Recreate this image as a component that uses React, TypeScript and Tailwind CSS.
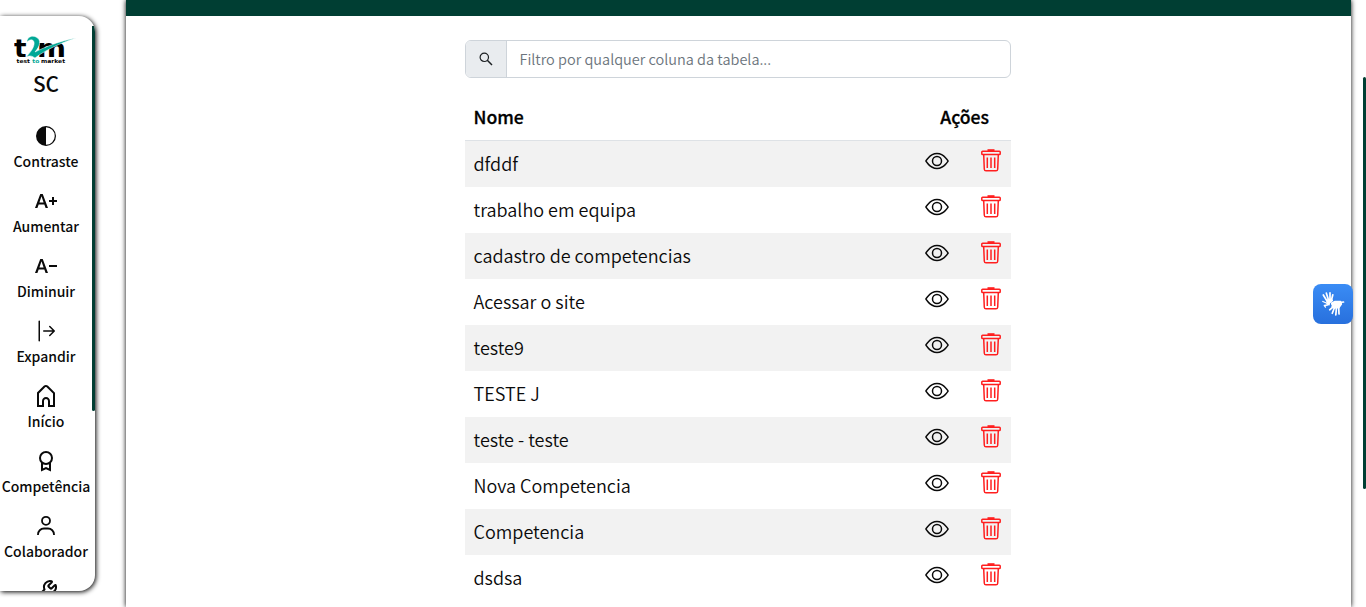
import type { ReactNode } from "react";
import { BsArrowBarRight, BsCircleHalf, BsEye } from "react-icons/bs";
import { CgHome } from "react-icons/cg";
import { MdTextDecrease, MdTextIncrease } from "react-icons/md";
import { Wrench } from "lucide-react";

const rows = [
  "dfddf",
  "trabalho em equipa",
  "cadastro de competencias",
  "Acessar o site",
  "teste9",
  "TESTE J",
  "teste - teste",
  "Nova Competencia",
  "Competencia",
  "dsdsa",
];

function Logo() {
  return (
    <svg width="62" height="30" viewBox="0 0 62 30" aria-label="t2m test to market">
      <g fontFamily="'DejaVu Sans'" fontWeight="700">
        <text x="0" y="21.500" fontSize="25" textLength="12.500" lengthAdjust="spacingAndGlyphs">t</text>
        <text x="23" y="21.500" fontSize="25" textLength="29" lengthAdjust="spacingAndGlyphs">m</text>
        <text x="2.500" y="28" fontSize="5.400" textLength="13.500" lengthAdjust="spacingAndGlyphs">test</text>
        <text x="18.300" y="28" fontSize="5.400" fill="#00a896" textLength="7" lengthAdjust="spacingAndGlyphs">to</text>
        <text x="27" y="28" fontSize="5.400" textLength="24" lengthAdjust="spacingAndGlyphs">market</text>
      </g>
      <path d="M13 7C13 2 18 0 22 2C28 5 26 11 21 17C31 12 46 6 62 3C46 8 30 16 21 23C18 21 16 20 12 22C17 17 21 11 20 7C19 4 16 4 13 7Z" fill="#00a896" stroke="#fff" strokeWidth=".5" />
    </svg>
  );
}

function SearchIcon() {
  return (
    <svg width="14" height="14" viewBox="0 0 14 14" fill="none" stroke="#1b1f22">
      <circle cx="5.300" cy="5.300" r="4.200" strokeWidth="1.200" />
      <path d="M8.300 8.300L13 13" strokeWidth="1.500" />
    </svg>
  );
}

function AwardIcon() {
  return (
    <svg width="24" height="24" viewBox="0 0 24 24" fill="none" stroke="currentColor" strokeWidth="2">
      <circle cx="12" cy="9" r="6" />
      <path d="M8 14v7l4-2 4 2v-7" />
    </svg>
  );
}

function UserIcon() {
  return (
    <svg width="24" height="24" viewBox="0 0 24 24" fill="none" stroke="currentColor" strokeWidth="1.800">
      <circle cx="12" cy="6.800" r="4" />
      <path d="M4 21v-.5a6 6 0 0 1 6-6h4a6 6 0 0 1 6 6v.5" />
    </svg>
  );
}

function TrashIcon() {
  return (
    <svg width="20" height="24" viewBox="0 0 20 24" fill="none" stroke="#ff1f1f" strokeWidth="1.5">
      <rect x=".8" y="2.200" width="18.400" height="3.400" rx=".8" />
      <path d="M6.500 1.200h7" strokeWidth="2" />
      <path d="M2.700 5.700l.6 14.500c.1 1 .7 1.600 1.700 1.600h10c1 0 1.600-.6 1.700-1.600l.6-14.500M6.300 8.500v10.500M10 8.500v10.500M13.700 8.500v10.500" />
    </svg>
  );
}

function HandsIcon() {
  return (
    <svg width="24" height="26" viewBox="0 0 24 26" fill="none" stroke="#fff" strokeLinecap="round" strokeLinejoin="round">
      <path d="M6 9L10.500 8L11.500 9.500L8.500 12L8 14L6 13Z" fill="#fff" strokeWidth="1.200" />
      <path d="M6 10L2.300 4M7.500 9L5.300 2M9 9V1.800M10.500 9L11.800 3.800" strokeWidth="1.700" />
      <path d="M6.500 12.500L1.800 10.500M6.500 14L3.300 14.500L4.500 16" strokeWidth="1.300" />
      <path d="M10.500 12L14 10.300L19.500 10.300L20.500 13L18 16.500L13 17L11 15.500L14 13.500L11 14Z" fill="#fff" strokeWidth="1.300" />
      <path d="M19 11.500L22.500 11M12.500 15.500L8.700 18.800M13.500 16.500L11.300 22.300M15.500 16.500L14.800 23.800M17.700 16L18 23" strokeWidth="1.700" />
    </svg>
  );
}

function MenuItem({ icon, label }: { icon: ReactNode; label?: string }) {
  return (
    <div className="flex h-[65px] shrink-0 flex-col items-center">
      <div className="flex h-6 items-center">{icon}</div>
      {label && (
        <span className="mt-[2px] text-[14px] leading-[22px] font-medium whitespace-nowrap">{label}</span>
      )}
    </div>
  );
}

export default function App() {
  return (
    <div className="relative flex h-[607px] w-[1366px] overflow-hidden bg-white font-['Noto_Sans_CJK_JP',sans-serif] text-[#0a0a0a]">
      <aside className="relative mt-4 flex h-[575px] w-[95px] shrink-0 flex-col overflow-hidden rounded-r-[16px] shadow-[1px_1px_5px_#000]">
        <div className="flex h-[108px] w-[92px] shrink-0 flex-col items-center">
          <div className="mt-[19px] mr-[2px] h-[30px]">
            <Logo />
          </div>
          <span className="mt-[2px] text-[20.8px] leading-[32px] font-medium">SC</span>
        </div>
        <nav className="flex w-[92px] flex-col">
          <MenuItem icon={<BsCircleHalf size={20} />} label="Contraste" />
          <MenuItem icon={<MdTextIncrease size={24} />} label="Aumentar" />
          <MenuItem icon={<MdTextDecrease size={24} />} label="Diminuir" />
          <MenuItem icon={<BsArrowBarRight size={24} />} label="Expandir" />
          <MenuItem icon={<CgHome size={24} />} label="Início" />
          <MenuItem icon={<AwardIcon />} label="Competência" />
          <MenuItem icon={<UserIcon />} label="Colaborador" />
          <MenuItem icon={<Wrench size={24} strokeWidth={2} />} />
        </nav>
        <div className="absolute top-[10px] right-0 h-[385px] w-[3px] rounded-b-sm bg-[#003e33]" />
      </aside>

      <main className="ml-[31px] flex w-[1225px] shrink-0 flex-col items-center shadow-[0_0_5px_#000]">
        <div className="h-4 w-full shrink-0 bg-[#003e33]" />
        <div className="mt-6 ml-[-1px] flex h-[38px] w-[546px] shrink-0 overflow-hidden rounded-md border border-[#ced4da]">
          <div className="flex w-[41px] items-center justify-center border-r border-[#ced4da] bg-[#e9ecef]">
            <SearchIcon />
          </div>
          <input
            className="min-w-0 flex-1 pr-3 pl-[12.5px] text-[14.5px] font-[350] outline-none placeholder:text-[#6c757d]"
            placeholder="Filtro por qualquer coluna da tabela..."
          />
        </div>
        <div className="mt-[17px] ml-[-1px] w-[546px]">
          <div className="flex h-[46px] items-center justify-between border-b border-[#dee2e6] pr-[22px] pl-[8.5px] text-[17.6px] font-medium text-black [-webkit-text-stroke:0.3px_#000]">
            <span>Nome</span>
            <span>Ações</span>
          </div>
          {rows.map((name) => (
            <div key={name} className="flex h-[46px] items-center pb-[2px] pl-[8.5px] odd:bg-white even:bg-[#f2f2f2]">
              <span className="flex-1 pt-px text-[18px] font-[350]">{name}</span>
              <BsEye size={24} className="mb-[5px]" />
              <div className="mr-[10px] mb-[5px] ml-8">
                <TrashIcon />
              </div>
            </div>
          ))}
        </div>
      </main>

      <div className="absolute top-[284px] left-[1313px] flex h-10 w-10 items-center justify-center rounded-lg bg-gradient-to-b from-[#3a8cf5] to-[#2870dd]">
        <HandsIcon />
      </div>
      <div className="absolute top-[77px] left-[1363px] h-[412px] w-[3px] rounded-sm bg-[#003e33]" />
    </div>
  );
}
